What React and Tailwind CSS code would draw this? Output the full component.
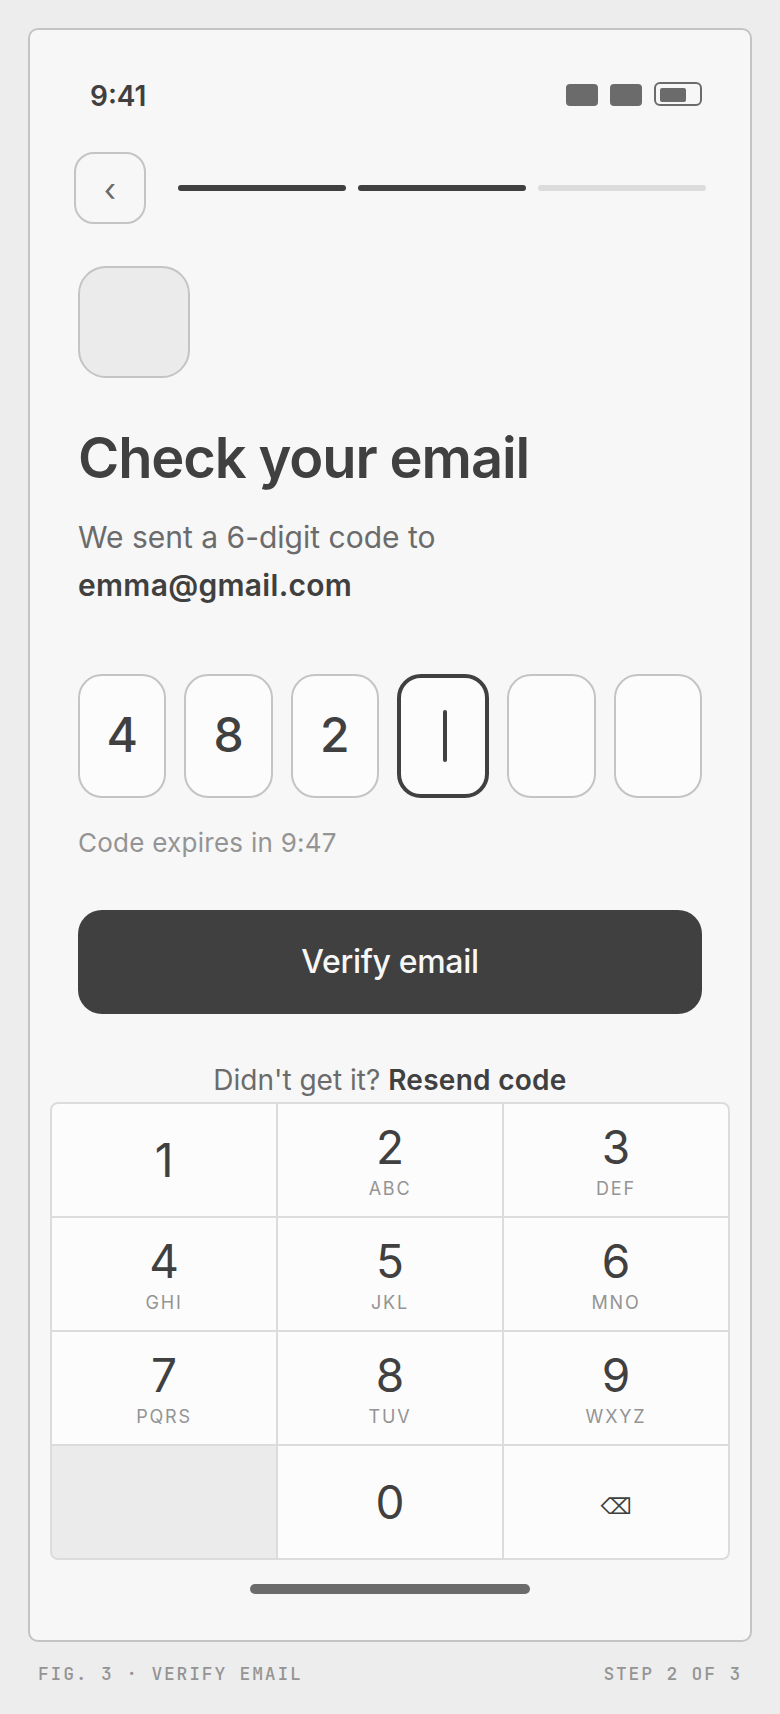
import React, { useState } from 'react';

const KEYS = [
  { digit: '1' },
  { digit: '2', letters: 'ABC' },
  { digit: '3', letters: 'DEF' },
  { digit: '4', letters: 'GHI' },
  { digit: '5', letters: 'JKL' },
  { digit: '6', letters: 'MNO' },
  { digit: '7', letters: 'PQRS' },
  { digit: '8', letters: 'TUV' },
  { digit: '9', letters: 'WXYZ' },
];

const CODE_LENGTH = 6;

function StatusBar() {
  return (
    <div className="flex items-baseline justify-between pl-15 pr-12">
      <span className="text-[28px] leading-10 font-semibold">9:41</span>
      <div className="flex items-end gap-3" aria-hidden="true">
        <span className="h-[22px] w-8 rounded-sm bg-[#6b6b6b]" />
        <span className="h-[22px] w-8 rounded-sm bg-[#6b6b6b]" />
        <span className="h-6 w-12 rounded-md border-2 border-[#6b6b6b] p-1">
          <span className="block h-3.5 w-[26px] rounded-xs bg-[#6b6b6b]" />
        </span>
      </div>
    </div>
  );
}

function StepHeader({ step, total }) {
  return (
    <div className="mt-9 flex items-center gap-8 px-11">
      <button
        type="button"
        aria-label="Back"
        className="flex size-18 shrink-0 items-center justify-center rounded-[20px] border-2 border-[#c4c4c4] pt-1 text-[32px] leading-10 text-[#6b6b6b]"
      >
        ‹
      </button>
      <div className="flex flex-1 gap-3" role="img" aria-label={`Step ${step} of ${total}`}>
        {Array.from({ length: total }, (_, i) => (
          <span
            key={i}
            className={`h-1.5 flex-1 rounded-full ${i < step ? 'bg-[#404040]' : 'bg-[#dcdcdc]'}`}
          />
        ))}
      </div>
    </div>
  );
}

function CodeCell({ index, value, active }) {
  return (
    <div
      className={`relative h-31 min-w-0 flex-1 rounded-3xl bg-[#fcfcfc] ${
        active ? 'border-4 border-[#404040]' : 'border-2 border-[#c4c4c4]'
      }`}
    >
      <input
        type="text"
        inputMode="numeric"
        readOnly
        value={value}
        aria-label={`Digit ${index + 1}`}
        className="block size-full bg-transparent pb-1 text-center text-5xl font-medium outline-none"
      />
      {active && (
        <span className="absolute top-1/2 left-1/2 h-13 w-1 -translate-y-1/2 rounded-xs bg-[#404040]" />
      )}
    </div>
  );
}

function Keypad({ onDigit, onDelete }) {
  const keyClass = 'flex h-28 flex-col items-center justify-center gap-0.5 bg-[#fcfcfc]';

  return (
    <div className="mx-5 grid grid-cols-3 gap-0.5 overflow-hidden rounded-lg border-2 border-[#dcdcdc] bg-[#dcdcdc]">
      {KEYS.map(({ digit, letters }) => (
        <button key={digit} type="button" className={keyClass} onClick={() => onDigit(digit)}>
          <span className="text-[46px] leading-14">{digit}</span>
          {letters && (
            <span className="text-lg leading-6 tracking-widest text-[#949494]">{letters}</span>
          )}
        </button>
      ))}
      <div className="bg-[#ebebeb]" />
      <button type="button" className={keyClass} onClick={() => onDigit('0')}>
        <span className="text-[46px] leading-14">0</span>
      </button>
      <button type="button" aria-label="Delete" className={keyClass} onClick={onDelete}>
        <span className="text-[46px] leading-14">
          <span className="font-['DejaVu_Sans',sans-serif] text-[22px]">⌫</span>
        </span>
      </button>
    </div>
  );
}

export default function App() {
  const [code, setCode] = useState('482');

  const addDigit = (digit) => setCode((c) => (c.length < CODE_LENGTH ? c + digit : c));
  const removeDigit = () => setCode((c) => c.slice(0, -1));

  return (
    <div className="min-h-screen bg-[#ededed] p-7 pb-0 font-['Inter',sans-serif] text-[#404040]">
      <main className="rounded-[10px] border-2 border-[#c4c4c4] bg-[#f7f7f7] py-[46px]">
        <StatusBar />
        <StepHeader step={2} total={3} />

        <div className="px-12 pt-[42px]">
          <div className="size-28 rounded-[28px] border-2 border-[#c4c4c4] bg-[#ebebeb]" />
          <h1 className="mt-12 text-[56px] leading-16 font-semibold tracking-[-0.02em]">
            Check your email
          </h1>
          <p className="mt-[23px] text-[30px] leading-12 text-[#6b6b6b]">
            We sent a 6-digit code to
            <br />
            <strong className="font-semibold tracking-[0.01em] text-[#404040]">
              emma@gmail.com
            </strong>
          </p>

          <div className="mt-[65px] flex gap-[18px]" role="group" aria-label="Verification code">
            {Array.from({ length: CODE_LENGTH }, (_, i) => (
              <CodeCell key={i} index={i} value={code[i] || ''} active={i === code.length} />
            ))}
          </div>
          <p className="mt-6 text-[26px] leading-[42px] tracking-[0.01em] text-[#949494]">
            Code expires in 9:47
          </p>

          <button
            type="button"
            className="mt-[46px] h-26 w-full rounded-3xl bg-[#404040] text-[32px] font-medium tracking-[-0.01em] text-[#f7f7f7]"
          >
            Verify email
          </button>
          <p className="mt-11 text-center text-[28px] leading-11 text-[#6b6b6b]">
            Didn't get it?{' '}
            <a href="#resend" className="font-semibold tracking-[0.01em] text-[#404040]">
              Resend code
            </a>
          </p>
        </div>

        <Keypad onDigit={addDigit} onDelete={removeDigit} />
        <div className="mx-auto mt-6 h-2.5 w-70 rounded-full bg-[#6b6b6b]" />
      </main>

      <footer className="mt-[18px] flex justify-between px-2.5 font-['JetBrains_Mono','Liberation_Mono',monospace] text-lg leading-7 font-medium tracking-widest text-[#949494] uppercase">
        <span>Fig. 3 · Verify email</span>
        <span>Step 2 of 3</span>
      </footer>
    </div>
  );
}
